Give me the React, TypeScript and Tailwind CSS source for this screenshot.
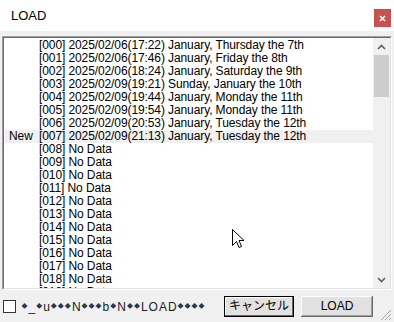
import React from "react";

const entries: string[] = [
  "2025/02/06(17:22) January, Thursday the 7th",
  "2025/02/06(17:46) January, Friday the 8th",
  "2025/02/06(18:24) January, Saturday the 9th",
  "2025/02/09(19:21) Sunday, January the 10th",
  "2025/02/09(19:44) January, Monday the 11th",
  "2025/02/09(19:54) January, Monday the 11th",
  "2025/02/09(20:53) January, Tuesday the 12th",
  "2025/02/09(21:13) January, Tuesday the 12th",
];

const rows = Array.from({ length: 21 }, (_, i) => ({
  id: `[${String(i).padStart(3, "0")}]`,
  text: entries[i] ?? "No Data",
  isNew: i === 7,
}));

// garbled label as shown in the dialog
const label = "◆_◆u◆◆◆N◆◆◆b◆N◆◆LOAD◆◆◆◆";

const font = { fontFamily: '"Liberation Sans", "Noto Sans CJK JP", sans-serif' };

const App = () => {
  return (
    <div
      className="relative w-[394px] h-[322px] bg-[#f0f0f0] flex flex-col overflow-hidden text-black"
      style={font}
    >
      {/* title bar */}
      <div className="h-[31px] bg-white flex items-start justify-between">
        <span className="text-[13px] pl-[11px] pt-[6px]">LOAD</span>
        <div className="mt-[9px] mr-[3px] w-[17px] h-[18px] bg-[#c75050] flex items-center justify-center">
          <svg width="7" height="7" viewBox="0 0 7 7">
            <path d="M1 1 L6 6 M6 1 L1 6" stroke="white" strokeWidth="1.6" />
          </svg>
        </div>
      </div>

      {/* list box */}
      <div className="mt-[5px] mx-[2px] h-[254px] border border-t-[#a0a0a0] border-l-[#a0a0a0] border-r-white border-b-white">
        <div className="h-full border border-t-[#696969] border-l-[#696969] border-r-[#e3e3e3] border-b-[#e3e3e3] bg-white flex">
          <div className="flex-1 overflow-hidden pt-[1px] pl-[1px]">
            {rows.map((r) => (
              <div
                key={r.id}
                className={`h-[13px] flex items-center text-[12px] leading-[13px] whitespace-nowrap tracking-[-0.1px] ${
                  r.isNew ? "bg-[#f0f0f0]" : ""
                }`}
              >
                <span className="w-[34px] pl-[4px]">{r.isNew ? "New" : ""}</span>
                <span>
                  {r.id} {r.text}
                </span>
              </div>
            ))}
          </div>
          {/* scrollbar */}
          <div className="w-[17px] bg-[#f0f0f0] flex flex-col">
            <div className="h-[17px] flex items-center justify-center">
              <svg width="9" height="6" viewBox="0 0 9 6">
                <path d="M1 5 L4.5 1.5 L8 5" stroke="#606060" strokeWidth="1.6" fill="none" />
              </svg>
            </div>
            <div className="mx-[1px] h-[42px] bg-[#cdcdcd]" />
            <div className="flex-1" />
            <div className="h-[17px] flex items-center justify-center">
              <svg width="9" height="6" viewBox="0 0 9 6">
                <path d="M1 1 L4.5 4.5 L8 1" stroke="#606060" strokeWidth="1.6" fill="none" />
              </svg>
            </div>
          </div>
        </div>
      </div>

      {/* bottom bar */}
      <div className="flex-1 flex items-center pl-[3px] pr-[21px]">
        <div className="shrink-0 w-[13px] h-[13px] bg-white border border-[#333333] mt-[1px]" />
        <span className="ml-[5px] text-[12px] text-[#222] mt-[1px] whitespace-nowrap flex items-center">
          {label.split("").map((c, i) =>
            c === "◆" ? (
              <span key={i} className="w-[7px] flex justify-center text-[6px] text-[#2b3550]">
                ◆
              </span>
            ) : (
              <span key={i} className="px-[0.5px]">{c}</span>
            )
          )}
        </span>
        <div className="flex-1" />
        <button className="shrink-0 w-[70px] h-[21px] bg-[#e1e1e1] border border-black text-[12px] whitespace-nowrap flex items-center justify-center shadow-[inset_-1px_-1px_0_#696969,inset_1px_1px_0_#ffffff]">
          キャンセル
        </button>
        <button className="shrink-0 ml-[7px] w-[72px] h-[21px] bg-[#e1e1e1] text-[12px] flex items-center justify-center shadow-[inset_-1px_-1px_0_#696969,inset_1px_1px_0_#ffffff,inset_-2px_-2px_0_#a0a0a0]">
          LOAD
        </button>
      </div>

      {/* resize grip */}
      <svg className="absolute right-[2px] bottom-[1px]" width="14" height="14" viewBox="0 0 14 14">
        <path d="M13 3 L3 13 M13 7 L7 13 M13 11 L11 13" stroke="#a0a0a0" strokeWidth="1" />
      </svg>

      {/* mouse cursor */}
      <svg className="absolute left-[232px] top-[229px]" width="13" height="21" viewBox="0 0 13 21">
        <path
          d="M0.5 0.5 L0.5 16.5 L4.5 12.5 L7 18.5 L9.5 17.5 L7 11.5 L12 11.5 Z"
          fill="white"
          stroke="black"
          strokeWidth="1"
        />
      </svg>
    </div>
  );
};

export default App;
